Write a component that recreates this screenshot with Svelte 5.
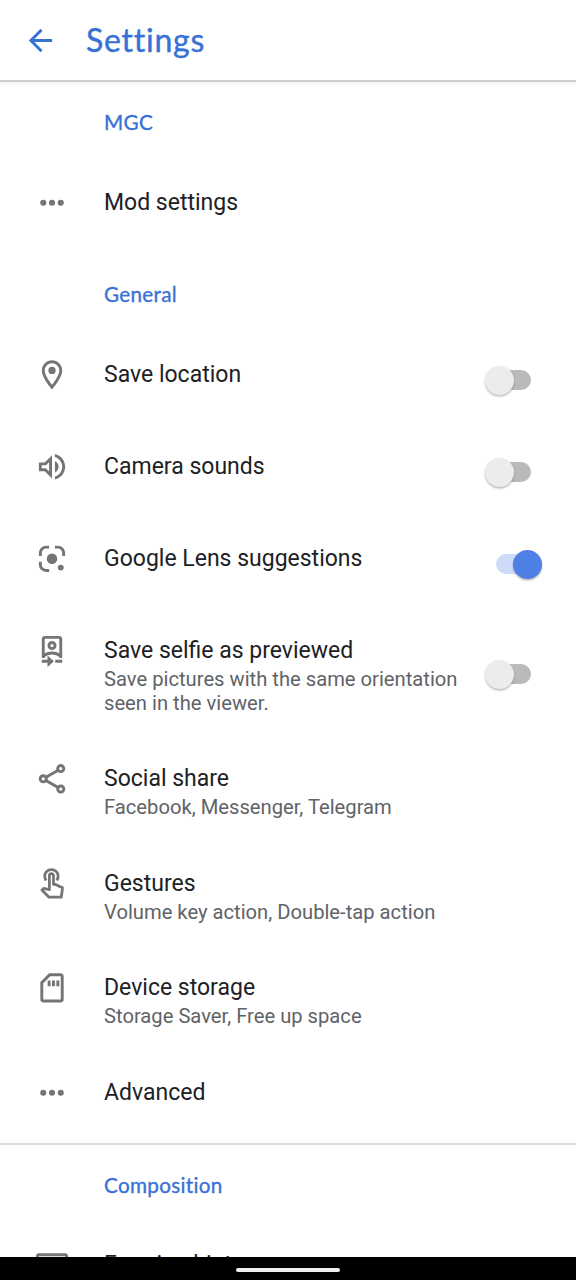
<script>
  const sections = [
    { title: 'MGC', rows: [{ icon: 'dots', title: 'Mod settings' }] },
    {
      title: 'General',
      rows: [
        { icon: 'pin', title: 'Save location', on: false },
        { icon: 'volume', title: 'Camera sounds', on: false },
        { icon: 'lens', title: 'Google Lens suggestions', on: true },
        {
          icon: 'selfie',
          title: 'Save selfie as previewed',
          sub: 'Save pictures with the same orientation seen in the viewer.',
          on: false
        },
        { icon: 'share', title: 'Social share', sub: 'Facebook, Messenger, Telegram' },
        { icon: 'touch', title: 'Gestures', sub: 'Volume key action, Double-tap action' },
        { icon: 'card', title: 'Device storage', sub: 'Storage Saver, Free up space' },
        { icon: 'dots', title: 'Advanced' }
      ]
    },
    { title: 'Composition', rows: [{ icon: 'frame', title: 'Framing hints' }] }
  ];
</script>

<div class="screen">
  <header>
    <svg class="back" viewBox="0 0 24 24"><path d="M20 11H7.8l5.6-5.6L12 4l-8 8 8 8 1.4-1.4L7.8 13H20z" /></svg>
    <h1>Settings</h1>
  </header>
  <main>
    {#each sections as section}
      <section>
        <h2>{section.title}</h2>
        {#each section.rows as row}
          <div class="row" class:double={row.sub}>
            <svg class="icon" viewBox="-0.35 -0.2 24 24">
              {#if row.icon === 'dots'}
                <circle cx="6" cy="12" r="2.1" /><circle cx="12" cy="12" r="2.1" /><circle cx="18" cy="12" r="2.1" />
              {:else if row.icon === 'pin'}
                <path d="M12 2C8.13 2 5 5.13 5 9c0 5.25 7 13 7 13s7-7.75 7-13c0-3.87-3.13-7-7-7zM7 9c0-2.76 2.24-5 5-5s5 2.24 5 5c0 2.88-2.88 7.19-5 9.88C9.92 16.21 7 11.85 7 9z" />
                <circle cx="12" cy="9" r="2.5" />
              {:else if row.icon === 'volume'}
                <path d="M3 9v6h4l5 5V4L7 9H3zm7-.17v6.34L7.83 13H5v-2h2.83L10 8.83zM16.5 12c0-1.77-1.02-3.29-2.5-4.03v8.05c1.48-.73 2.5-2.25 2.5-4.02zM14 3.23v2.06c2.89.86 5 3.54 5 6.71s-2.11 5.85-5 6.71v2.06c4.01-.91 7-4.49 7-8.77s-2.99-7.86-7-8.77z" />
              {:else if row.icon === 'lens'}
                <g class="line"><path d="M4 10V8a4 4 0 0 1 4-4h2M14 4h2a4 4 0 0 1 4 4v2M4 14v2a4 4 0 0 0 4 4h2" /></g>
                <circle cx="12" cy="12" r="3.6" /><circle cx="18" cy="18" r="2" />
              {:else if row.icon === 'selfie'}
                <g class="line"><path d="M6 17V4a1.2 1.2 0 0 1 1.2-1.2h9.6A1.2 1.2 0 0 1 18 4v13M6 15.6c3.5-2.8 8.5-2.8 12 0M5 19.2h6.8M14.2 19.2H19" /><circle cx="12" cy="8.4" r="2.1" /></g>
                <path d="M8.9 15.2l4.4 4-4.4 4z" />
              {:else if row.icon === 'share'}
                <g class="line"><path d="M7.8 10.9l8.4-4.8M7.8 13.1l8.4 4.8" /><circle cx="6" cy="12" r="2.1" /><circle cx="18" cy="5" r="2.1" /><circle cx="18" cy="19" r="2.1" /></g>
              {:else if row.icon === 'touch'}
                <g class="thin"><path d="M8 9.7a4.6 4.6 0 1 1 7.2 0" /><path d="M10.2 16V6.5a1.4 1.4 0 0 1 2.8 0v5.9h1.2l5 2.3-.8 6.4H9.8l-4.7-4.9 1.1-1z" /></g>
              {:else if row.icon === 'card'}
                <path d="M18 2h-8L4 8v12c0 1.1.9 2 2 2h12c1.1 0 2-.9 2-2V4c0-1.1-.9-2-2-2zm0 18H6V8.83L10.83 4H18v16zM9 7h2v4H9V7zm3 0h2v4h-2V7zm3 0h2v4h-2V7z" />
              {:else}
                <g class="line"><rect x="2" y="4.4" width="20" height="14" rx="1" /></g>
              {/if}
            </svg>
            <div class="text">
              <div class="title">{row.title}</div>
              {#if row.sub}<div class="sub">{row.sub}</div>{/if}
            </div>
            {#if row.on !== undefined}
              <div class="switch" class:on={row.on}><span class="thumb"></span></div>
            {/if}
          </div>
        {/each}
      </section>
    {/each}
  </main>
  <footer><span></span></footer>
</div>

<style>
  :global(body) { margin: 0; background: #fff; }
  .screen {
    width: 576px;
    height: 1280px;
    display: flex;
    flex-direction: column;
    overflow: hidden;
    background: #fff;
    font-family: Roboto, sans-serif;
    color: #202124;
  }
  header {
    flex: none;
    height: 80px;
    display: flex;
    align-items: center;
    border-bottom: 2px solid #d0d0d0;
    box-shadow: 0 2px 3px #0000000d;
  }
  .back { width: 35px; height: 35px; margin-left: 23px; fill: #3871d6; }
  h1 {
    margin: 0 0 0 28px;
    font: 400 32px/40px Lato, sans-serif;
    letter-spacing: 0.75px;
    color: #3871d6;
    -webkit-text-stroke: 0.4px #3871d6;
  }
  main { flex: 1; min-height: 0; overflow: hidden; }
  section:nth-child(2) { height: 895px; border-bottom: 2px solid #dedede; }
  h2 {
    margin: 0;
    height: 27px;
    padding: 27px 0 20px 104px;
    font: 400 20.7px/27px Lato, sans-serif;
    letter-spacing: 0.3px;
    color: #3871d6;
    -webkit-text-stroke: 0.35px #3871d6;
  }
  section:nth-child(2) h2 { padding-top: 33px; }
  .row { height: 92px; display: flex; align-items: flex-start; }
  .row.double { height: 104.7px; }
  .row.double:has(.switch) { height: 128px; }
  .icon { flex: none; width: 35px; height: 35px; margin: 29px 17.5px 0 34px; fill: #757575; }
  .line, .thin { fill: none; stroke: #757575; stroke-width: 2; }
  .thin { stroke-width: 1.9; stroke-linejoin: round; }
  .text { width: 364px; padding: 33px 0 0 17.5px; }
  .title { font-size: 23px; line-height: 27px; white-space: nowrap; }
  .sub { padding-top: 3px; font-size: 20.2px; line-height: 24px; color: #5f6368; }
  .switch {
    align-self: center;
    margin: 12px 0 0 28px;
    width: 35px;
    height: 20px;
    border-radius: 10px;
    background: #bababa;
    display: flex;
    align-items: center;
  }
  .thumb {
    flex: none;
    width: 29px;
    height: 29px;
    margin-left: -11px;
    border-radius: 50%;
    background: #ececec;
    box-shadow: 0 1.5px 2px #00000045;
  }
  .on { background: #ccdcf9; }
  .on .thumb { margin-left: 17px; background: #4e80e5; }
  section:nth-child(3) .text { padding-top: 32px; }
  footer {
    flex: none;
    height: 23px;
    background: #000;
    display: flex;
    justify-content: center;
    align-items: center;
  }
  footer span { width: 104px; height: 4px; margin-top: 3px; border-radius: 2px; background: #f0f0f0; }
</style>
